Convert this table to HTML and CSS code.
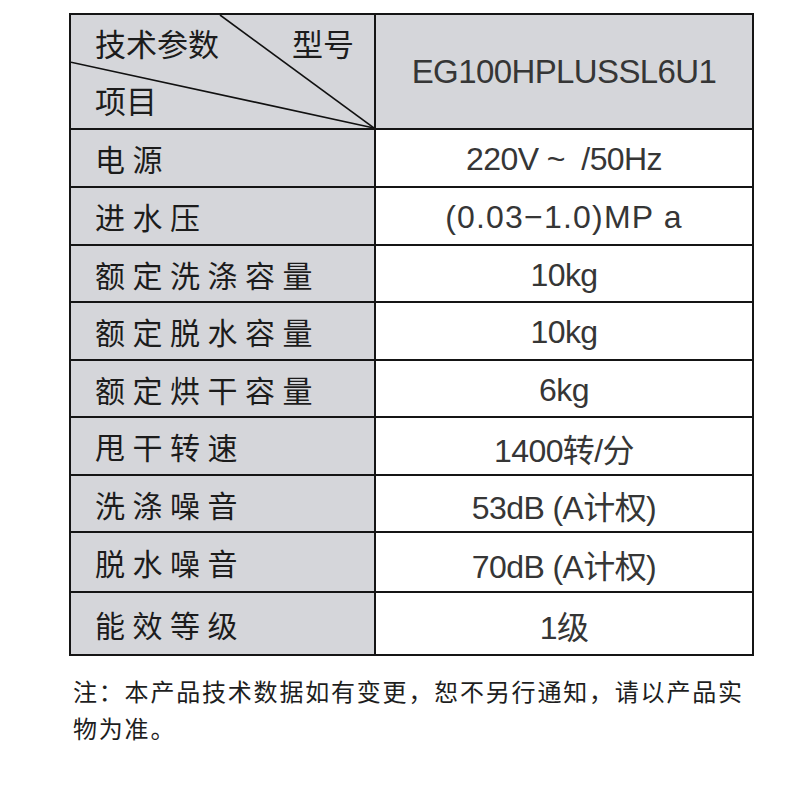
FILE: index.html
```html
<!DOCTYPE html>
<html lang="zh">
<head>
<meta charset="utf-8">
<link rel="stylesheet" href="styles.css">
</head>
<body>
<div class="page">
  <table class="spec">
    <tr class="r-head">
      <td class="lbl head">
        <svg class="diag" viewBox="0 0 305 115" preserveAspectRatio="none">
          <line x1="150" y1="0" x2="305" y2="115" />
          <line x1="0" y1="48" x2="305" y2="115" />
        </svg>
        <div class="head-inner">
          <div class="head-top"><span>技术参数</span><span>型号</span></div>
          <div class="head-bot"><span>项目</span></div>
        </div>
      </td>
      <td class="val model">EG100HPLUSSL6U1</td>
    </tr>
    <tr class="r58"><td class="lbl">电源</td><td class="val">220V ~&nbsp; /50Hz</td></tr>
    <tr class="r58"><td class="lbl">进水压</td><td class="val wide">(0.03−1.0)MP a</td></tr>
    <tr class="r57"><td class="lbl">额定洗涤容量</td><td class="val">10kg</td></tr>
    <tr class="r58"><td class="lbl">额定脱水容量</td><td class="val">10kg</td></tr>
    <tr class="r57"><td class="lbl">额定烘干容量</td><td class="val">6kg</td></tr>
    <tr class="r58"><td class="lbl">甩干转速</td><td class="val">1400转/分</td></tr>
    <tr class="r57"><td class="lbl">洗涤噪音</td><td class="val">53dB (A计权)</td></tr>
    <tr class="r60"><td class="lbl">脱水噪音</td><td class="val">70dB (A计权)</td></tr>
    <tr class="r63"><td class="lbl">能效等级</td><td class="val">1级</td></tr>
  </table>
  <p class="note">注：本产品技术数据如有变更，恕不另行通知，请以产品实物为准。</p>
</div>
</body>
</html>
```
FILE: styles.css
```css
html, body {
  margin: 0;
  padding: 0;
  background: #ffffff;
}
.page {
  padding: 13px 0 0 69px;
}
.spec {
  border-collapse: collapse;
  width: 685px;
  table-layout: fixed;
  border: 2px solid #151515;
}
.spec td {
  border: 2px solid #151515;
  padding: 0;
  vertical-align: middle;
}
.r-head { height: 115px; }
.r58 { height: 58px; }
.r57 { height: 57px; }
.r60 { height: 60px; }
.r63 { height: 63px; }
.lbl {
  width: 305px;
  background: #d5d6da;
  font-family: "Noto Sans CJK SC", "Liberation Sans", sans-serif;
  font-size: 30px;
  letter-spacing: 7.5px;
  color: #1c1c1c;
  padding-left: 24px !important;
  box-sizing: border-box;
}
.head {
  position: relative;
  letter-spacing: 0;
  padding-left: 0 !important;
}
.diag {
  position: absolute;
  left: 0;
  top: 0;
  width: 100%;
  height: 100%;
}
.diag line {
  stroke: #111;
  stroke-width: 1.6;
  vector-effect: non-scaling-stroke;
}
.head-inner {
  position: relative;
  height: 113px;
  display: flex;
  flex-direction: column;
  justify-content: space-between;
  padding: 6px 20px 6px 24px;
  box-sizing: border-box;
  font-size: 31px;
  line-height: 44px;
}
.head-top {
  display: flex;
  justify-content: space-between;
}
.val {
  background: #ffffff;
  text-align: center;
  font-family: "Liberation Sans", "Noto Sans CJK SC", sans-serif;
  font-size: 32px;
  letter-spacing: -0.6px;
  color: #363636;
  padding-top: 3px !important;
}
.wide {
  letter-spacing: 1.2px;
}
.model {
  background: #d5d6da;
  font-size: 33px;
  padding-top: 0 !important;
}
.note {
  margin: 16px 0 0 4px;
  width: 685px;
  font-family: "Noto Sans CJK SC", sans-serif;
  font-size: 24px;
  letter-spacing: 1.8px;
  line-height: 37px;
  color: #1e1e1e;
}
```
